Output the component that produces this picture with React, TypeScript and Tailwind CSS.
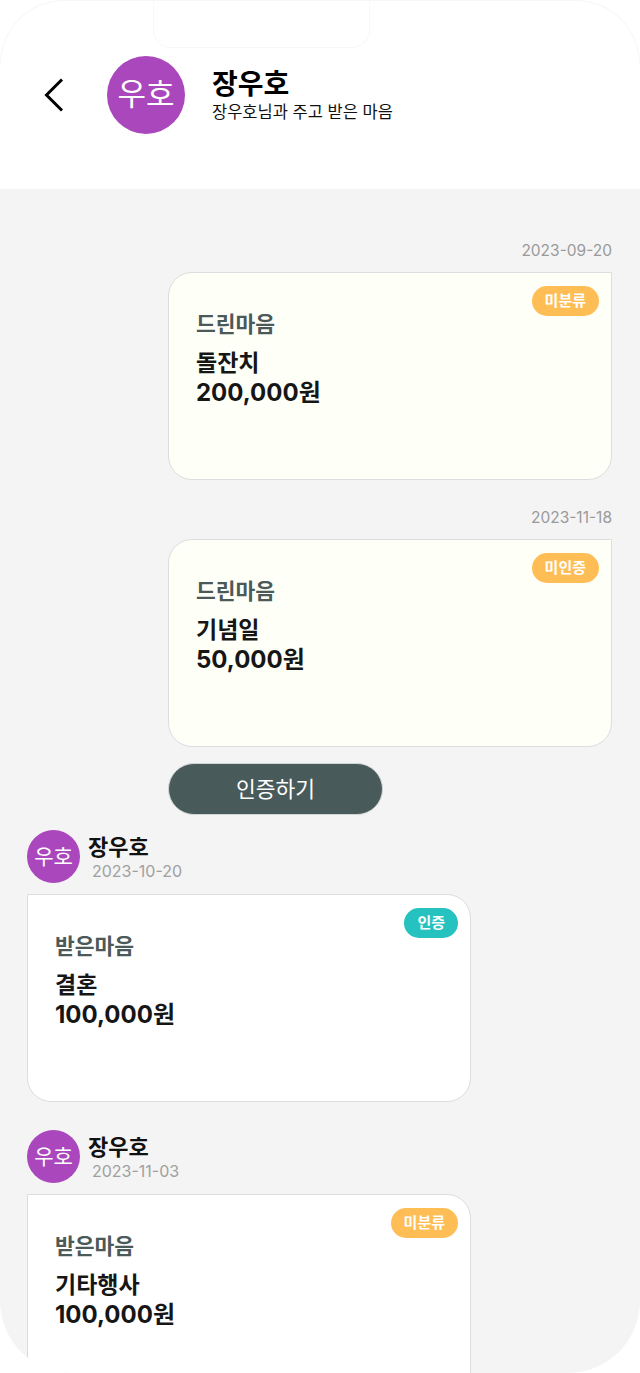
import React from "react";

type Sent = { date: string; badge: string; badgeColor: string; title: string; amount: string; verify?: boolean };
type Received = { date: string; badge: string; badgeColor: string; title: string; amount: string };

const sent: Sent[] = [
  { date: "2023-09-20", badge: "미분류", badgeColor: "bg-[#ffbe55]", title: "돌잔치", amount: "200,000원" },
  { date: "2023-11-18", badge: "미인증", badgeColor: "bg-[#ffbe55]", title: "기념일", amount: "50,000원", verify: true },
];

const received: Received[] = [
  { date: "2023-10-20", badge: "인증", badgeColor: "bg-[#25c2bf]", title: "결혼", amount: "100,000원" },
  { date: "2023-11-03", badge: "미분류", badgeColor: "bg-[#ffbe55]", title: "기타행사", amount: "100,000원" },
];

const Badge = ({ label, color }: { label: string; color: string }) => (
  <span
    className={`absolute right-[12px] top-[13px] flex h-[30px] items-center rounded-full px-[13px] text-[15px] font-semibold text-white ${color}`}
  >
    {label}
  </span>
);

const CardBody = ({ kind, title, amount }: { kind: string; title: string; amount: string }) => (
  <div className="pl-[27px] pt-[36px]">
    <p className="text-[21.5px] font-semibold leading-[30px] text-[#4b5959]">{kind}</p>
    <p className="mt-[9px] text-[23px] font-bold leading-[30px] text-[#161616]">{title}</p>
    <p className="text-[24px] font-bold leading-[30px] text-[#161616]">{amount}</p>
  </div>
);

const Avatar = ({ size }: { size: "lg" | "sm" }) =>
  size === "lg" ? (
    <div className="grid h-[78px] w-[78px] shrink-0 place-items-center rounded-full bg-[#ab47bc] text-[31px] text-white">
      우호
    </div>
  ) : (
    <div className="grid h-[53px] w-[53px] shrink-0 place-items-center rounded-full bg-[#ab47bc] text-[21px] text-white">
      우호
    </div>
  );

const App = () => {
  return (
    <div
      className="relative h-[1373px] w-[640px] overflow-hidden bg-white"
      style={{ fontFamily: '"Inter", "Noto Sans CJK KR", sans-serif' }}
    >
      {/* faint phone frame + notch outline */}
      <div className="pointer-events-none absolute inset-x-0 top-0 h-[64px] rounded-t-[64px] border-x border-t border-[#f7f7f7]" />
      <div className="pointer-events-none absolute left-[153px] top-[-2px] h-[50px] w-[217px] rounded-b-[18px] border-x border-b border-[#f8f8f8]" />

      <div className="flex h-full flex-col overflow-hidden rounded-b-[72px] bg-[#f4f4f4]">
        <header className="flex h-[189px] shrink-0 items-center bg-white pl-[44px]">
          <svg width="20" height="34" viewBox="0 0 20 34" fill="none" className="mr-[43px]">
            <polyline points="18,1.5 2.5,17 18,32.5" stroke="#000" strokeWidth="3" />
          </svg>
          <Avatar size="lg" />
          <div className="ml-[27px] flex flex-col">
            <h1 className="text-[28px] font-bold leading-[34px] text-black">장우호</h1>
            <p className="text-[16.5px] leading-[22px] text-[#111]">장우호님과 주고 받은 마음</p>
          </div>
        </header>

        <main className="flex flex-col px-[28px] pt-[52px]">
          {sent.map((s, i) => (
            <div key={s.date} className={`flex flex-col items-end ${i > 0 ? "mt-[28px]" : ""}`}>
              <span className="text-[15.5px] leading-[20px] text-[#9a9a9a]">{s.date}</span>
              <div className="relative mt-[11px] h-[208px] w-[444px] rounded-[24px] rounded-tr-none border border-[#dddddd] bg-[#fefff7]">
                <Badge label={s.badge} color={s.badgeColor} />
                <CardBody kind="드린마음" title={s.title} amount={s.amount} />
              </div>
              {s.verify && (
                <div className="mt-[16px] w-[444px]">
                  <button className="h-[52px] w-[215px] rounded-full border border-[#cfd4d4] bg-[#485a5a] text-[21.5px] text-white">
                    인증하기
                  </button>
                </div>
              )}
            </div>
          ))}

          {received.map((r, i) => (
            <div key={r.date} className={`flex flex-col ${i === 0 ? "mt-[15px]" : "mt-[28px]"} -ml-px`}>
              <div className="flex items-start">
                <Avatar size="sm" />
                <div className="ml-[8px] flex flex-col pt-[4px]">
                  <span className="text-[22px] font-semibold leading-[27px] text-[#111]">장우호</span>
                  <span className="ml-[4px] text-[16px] leading-[20px] text-[#a0a0a0]">{r.date}</span>
                </div>
              </div>
              <div className="relative mt-[11px] h-[208px] w-[444px] shrink-0 rounded-[24px] rounded-tl-none border border-[#dddddd] bg-white">
                <Badge label={r.badge} color={r.badgeColor} />
                <CardBody kind="받은마음" title={r.title} amount={r.amount} />
              </div>
            </div>
          ))}
        </main>
      </div>
    </div>
  );
};

export default App;
